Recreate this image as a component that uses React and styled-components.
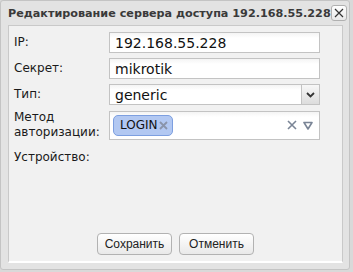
import React from 'react'
import styled, { createGlobalStyle } from 'styled-components'

const Global = createGlobalStyle`
  html, body {
    margin: 0;
    padding: 0;
    background: #d9d9d9;
  }
  body {
    font-family: "DejaVu Sans", "Liberation Sans", sans-serif;
  }
`

const Window = styled.div`
  box-sizing: border-box;
  width: 350px;
  height: 270px;
  background: #e3e3e3;
  border: 1px solid #c4c4c4;
  border-radius: 3px;
  display: flex;
  flex-direction: column;
  padding: 0 6px 6px 7px;
`

const TitleBar = styled.div`
  height: 24px;
  display: flex;
  align-items: center;
  justify-content: space-between;
`

const Title = styled.div`
  font-family: "DejaVu Sans", sans-serif;
  font-weight: bold;
  font-size: 11.2px;
  color: #3a3a3a;
  white-space: nowrap;
  padding-top: 1px;
`

const Close = styled.div`
  flex-shrink: 0;
  width: 14px;
  height: 14px;
  border: 1px solid #b0b0b0;
  border-radius: 3px;
  background: linear-gradient(#ffffff, #e8e8e8);
  display: flex;
  align-items: center;
  justify-content: center;
  margin-right: -2px;
`

const Body = styled.div`
  flex: 1;
  background: #f1f1f1;
  border: 1px solid #c9c9c9;
  border-bottom: 2px solid #ffffff;
  display: flex;
  flex-direction: column;
  padding: 6px 22px 0 5px;
`

const Row = styled.div`
  display: flex;
  align-items: center;
  margin-bottom: ${(p) => p.gap || 5}px;
`

const Label = styled.div`
  width: 95px;
  font-size: 12px;
  color: #1a1a1a;
  line-height: 15px;
`

const Field = styled.div`
  box-sizing: border-box;
  flex: 1;
  height: ${(p) => p.h || 21}px;
  border: 1px solid #c3c3c3;
  background: linear-gradient(#f4f4f4, #ffffff 5px);
  display: flex;
  align-items: center;
  padding-left: ${(p) => p.pl || 5}px;
  font-size: 14px;
  color: #111;
`

const ArrowBtn = styled.div`
  margin-left: auto;
  width: 17px;
  height: 100%;
  border-left: 1px solid #c3c3c3;
  background: linear-gradient(#f8f8f8, #dcdcdc);
  display: flex;
  align-items: center;
  justify-content: center;
`

const Tag = styled.div`
  display: flex;
  align-items: center;
  height: 19px;
  padding: 0 4px 0 6px;
  border: 1px solid #7d9fe0;
  border-radius: 5px;
  background: #b2c8f2;
  font-size: 12px;
  color: #111;
`

const Icons = styled.div`
  margin-left: auto;
  display: flex;
  gap: 6px;
  align-items: center;
  padding-right: 6px;
`

const Footer = styled.div`
  margin-top: auto;
  display: flex;
  justify-content: center;
  gap: 7px;
  padding-bottom: 6px;
  padding-left: 17px;
`

const Button = styled.button`
  width: 75px;
  height: 22px;
  padding: 0;
  border: 1px solid #b2b2b2;
  border-radius: 4px;
  background: linear-gradient(#ffffff, #e9e9e9);
  font-family: "Liberation Sans", Arial, sans-serif;
  font-size: 12px;
  color: #222;
`

const App = () => (
  <>
    <Global />
    <Window>
      <TitleBar>
        <Title>Редактирование сервера доступа 192.168.55.228</Title>
        <Close>
          <svg width="10" height="10" viewBox="0 0 10 10">
            <path d="M1 1L9 9M9 1L1 9" stroke="#333" strokeWidth="1.2" />
          </svg>
        </Close>
      </TitleBar>
      <Body>
        <Row>
          <Label>IP:</Label>
          <Field>192.168.55.228</Field>
        </Row>
        <Row>
          <Label>Секрет:</Label>
          <Field>mikrotik</Field>
        </Row>
        <Row>
          <Label>Тип:</Label>
          <Field>
            generic
            <ArrowBtn>
              <svg width="9" height="6" viewBox="0 0 9 6">
                <path d="M1 1L4.5 4.5L8 1" stroke="#333" strokeWidth="1.8" fill="none" />
              </svg>
            </ArrowBtn>
          </Field>
        </Row>
        <Row gap={10}>
          <Label>Метод<br />авторизации:</Label>
          <Field h={29} pl={3}>
            <Tag>
              LOGIN
              <svg width="9" height="9" viewBox="0 0 9 9" style={{ marginLeft: 1 }}>
                <path d="M1 1L8 8M8 1L1 8" stroke="#8a94aa" strokeWidth="1.8" />
              </svg>
            </Tag>
            <Icons>
              <svg width="10" height="10" viewBox="0 0 10 10">
                <path d="M1 1L9 9M9 1L1 9" stroke="#7a8596" strokeWidth="1.6" />
              </svg>
              <svg width="10" height="9" viewBox="0 0 10 9">
                <path d="M1 1.5H9L5 8Z" stroke="#7a8596" strokeWidth="1.6" fill="none" strokeLinejoin="round" />
              </svg>
            </Icons>
          </Field>
        </Row>
        <Row>
          <Label>Устройство:</Label>
        </Row>
        <Footer>
          <Button>Сохранить</Button>
          <Button>Отменить</Button>
        </Footer>
      </Body>
    </Window>
  </>
)

export default App
